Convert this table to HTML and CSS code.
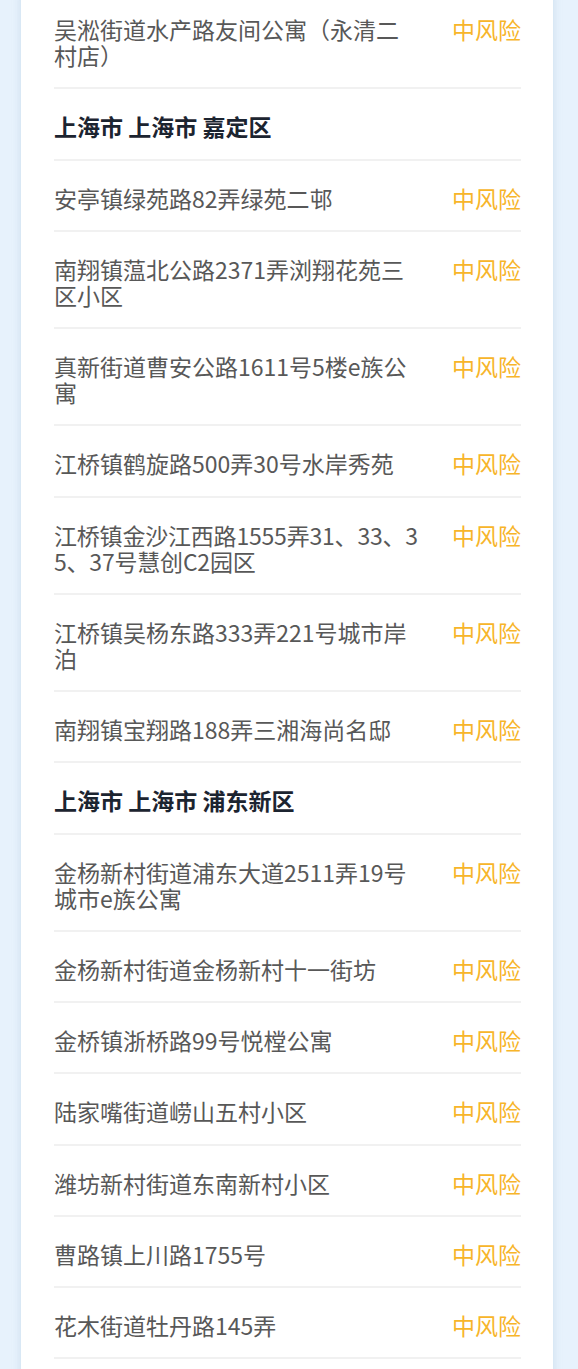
FILE: index.html
```html
<!DOCTYPE html>
<html lang="zh-CN">
<head>
    <meta charset="UTF-8">
    <meta name="viewport" content="width=device-width, initial-scale=1.0">
    <title>风险地区</title>
    <link rel="stylesheet" href="styles.css">
</head>
<body>
    <div class="card">
        <div class="row">
            <div class="addr">吴淞街道水产路友间公寓（永清二村店）</div>
            <div class="risk">中风险</div>
        </div>

        <div class="row head">上海市 上海市 嘉定区</div>
        <div class="row">
            <div class="addr">安亭镇绿苑路82弄绿苑二邨</div>
            <div class="risk">中风险</div>
        </div>
        <div class="row">
            <div class="addr">南翔镇蕰北公路2371弄浏翔花苑三区小区</div>
            <div class="risk">中风险</div>
        </div>
        <div class="row">
            <div class="addr">真新街道曹安公路1611号5楼e族公寓</div>
            <div class="risk">中风险</div>
        </div>
        <div class="row">
            <div class="addr">江桥镇鹤旋路500弄30号水岸秀苑</div>
            <div class="risk">中风险</div>
        </div>
        <div class="row">
            <div class="addr tight">江桥镇金沙江西路1555弄31、33、35、37号慧创C2园区</div>
            <div class="risk">中风险</div>
        </div>
        <div class="row">
            <div class="addr">江桥镇吴杨东路333弄221号城市岸泊</div>
            <div class="risk">中风险</div>
        </div>
        <div class="row">
            <div class="addr">南翔镇宝翔路188弄三湘海尚名邸</div>
            <div class="risk">中风险</div>
        </div>

        <div class="row head">上海市 上海市 浦东新区</div>
        <div class="row">
            <div class="addr">金杨新村街道浦东大道2511弄19号城市e族公寓</div>
            <div class="risk">中风险</div>
        </div>
        <div class="row">
            <div class="addr">金杨新村街道金杨新村十一街坊</div>
            <div class="risk">中风险</div>
        </div>
        <div class="row">
            <div class="addr">金桥镇浙桥路99号悦樘公寓</div>
            <div class="risk">中风险</div>
        </div>
        <div class="row">
            <div class="addr">陆家嘴街道崂山五村小区</div>
            <div class="risk">中风险</div>
        </div>
        <div class="row">
            <div class="addr">潍坊新村街道东南新村小区</div>
            <div class="risk">中风险</div>
        </div>
        <div class="row">
            <div class="addr">曹路镇上川路1755号</div>
            <div class="risk">中风险</div>
        </div>
        <div class="row">
            <div class="addr">花木街道牡丹路145弄</div>
            <div class="risk">中风险</div>
        </div>
    </div>
</body>
</html>
```

FILE: styles.css
```css
body {
    margin: 0;
    background-color: #e7f2fc; /* light blue page */
    font-family: "Noto Sans CJK SC", "Noto Sans", sans-serif;
    height: 1369px;
    overflow: hidden;
}
.card {
    background: #ffffff;
    margin: -8px 25px 0 21px;
    padding: 0 32px 40px 33px;
    box-shadow: 0 0 8px rgba(150, 180, 210, 0.35);
}
.row {
    display: flex;
    justify-content: space-between;
    align-items: flex-start;
    gap: 31px;
    padding: 24px 0 19.25px;
    border-bottom: 2px solid #f1f1f1;
    font-size: 23px;
    line-height: 26px;
}
.addr {
    flex: 1;
    color: #585858;
    word-break: break-all;
}
.tight {
    letter-spacing: -0.2px;
}
.risk {
    color: #f7b52a; /* orange-yellow */
    white-space: nowrap;
}
.head {
    font-weight: bold;
    color: #1c2430;
}
```
